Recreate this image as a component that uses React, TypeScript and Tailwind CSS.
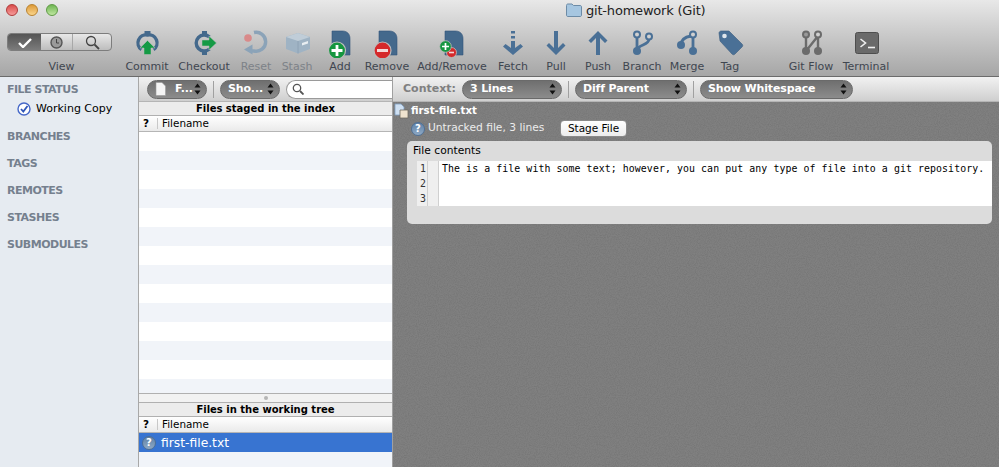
import React from 'react';

const SLATE = '#4a7096';
const HALO = '#bdbdbd';

const CommitIcon = () => (
  <svg width="30" height="30" viewBox="0 0 30 30">
    <path d="M12.500 3h6v5h-6z" fill="#44698c" />
    <path d="M9.500 21.500A8 8 0 0 1 15.500 7a8 8 0 0 1 6 14.500" fill="none" stroke="#44698c" strokeWidth="3.400" />
    <path d="M15.500 12.500l7.500 7.500h-4v6.500h-7V20H8z" fill="#159a45" stroke="#bdbdbd" strokeWidth="0.500" />
  </svg>
);

const CheckoutIcon = () => (
  <svg width="30" height="30" viewBox="0 0 30 30">
    <path d="M13 3h5v5h-5zM13 22h5v5h-5z" fill="#44698c" />
    <path d="M20.500 9a8 8 0 1 0 0 12" fill="none" stroke="#44698c" strokeWidth="3.400" />
    <path d="M27.500 15l-7.500-7v4h-7v6h7v4z" fill="#159a45" stroke="#bdbdbd" strokeWidth="0.500" />
  </svg>
);

const ResetIcon = () => (
  <svg width="30" height="30" viewBox="0 0 30 30">
    <path d="M13 4.500a9.500 9.500 0 1 1 0 18.500h-3" fill="none" stroke="#8ba3b8" strokeWidth="3.400" />
    <path d="M11.500 16.500v10L3 21.500z" fill="#8ba3b8" />
    <circle cx="7" cy="10" r="3.800" fill="#d98a8a" />
  </svg>
);

const StashIcon = () => (
  <svg width="30" height="30" viewBox="0 0 30 30">
    <path d="M16 5l12 4v12l-12 4.500L4 21V9z" fill="#9fb3c4" />
    <path d="M4 9l12 4 12-4-12-4z" fill="#c0cdd8" />
    <path d="M16 13v12.500" stroke="#8ba0b3" strokeWidth="0.800" />
    <path d="M20 15l6-2v2.500l-6 2z" fill="#e8edf1" />
  </svg>
);

const DocShape = () => (
  <path d="M7 3h10.500c4.500 0 7.500 3 7.500 7.500V27H7z" fill="#44698c" stroke="#34557a" strokeWidth="0.600" />
);

const AddIcon = () => (
  <svg width="30" height="30" viewBox="0 0 30 30">
    <DocShape />
    <circle cx="12" cy="22.500" r="8.500" fill="#15963f" stroke={HALO} strokeWidth="1.200" />
    <path d="M12 17v11M6.500 22.500h11" stroke="#fff" strokeWidth="2.800" />
  </svg>
);

const RemoveIcon = () => (
  <svg width="30" height="30" viewBox="0 0 30 30">
    <DocShape />
    <circle cx="10.500" cy="22.500" r="8.500" fill="#d5292b" stroke={HALO} strokeWidth="1.200" />
    <path d="M5 22.500h11" stroke="#f4dada" strokeWidth="3" />
  </svg>
);

const AddRemoveIcon = () => (
  <svg width="30" height="30" viewBox="0 0 30 30">
    <path d="M8 3h10.500c4.500 0 7.500 3 7.500 7.500V27H8z" fill="#44698c" stroke="#34557a" strokeWidth="0.600" />
    <circle cx="14.500" cy="24.500" r="5" fill="#d5292b" stroke={HALO} strokeWidth="0.800" />
    <path d="M12 24.500h5" stroke="#f4dada" strokeWidth="1.600" />
    <circle cx="8.500" cy="18.500" r="5.800" fill="#15963f" stroke={HALO} strokeWidth="0.800" />
    <path d="M8.500 15v7M5 18.500h7" stroke="#fff" strokeWidth="1.700" />
  </svg>
);

const FetchIcon = () => (
  <svg width="30" height="30" viewBox="0 0 30 30">
    <path d="M13 3h4v2.500h-4zM13 8h4v2.500h-4z" fill={SLATE} />
    <path d="M13 13h4v7l5.500-4 2.500 2.500L15 27 5 18.500 7.500 16l5.500 4z" fill={SLATE} />
  </svg>
);

const PullIcon = () => (
  <svg width="30" height="30" viewBox="0 0 30 30">
    <path d="M13 3h4v17l5-5 2.500 2.500L15 27l-9.500-9.500L8 15l5 5z" fill={SLATE} />
  </svg>
);

const PushIcon = () => (
  <svg width="30" height="30" viewBox="0 0 30 30">
    <path d="M13 27h4V10l5 5 2.500-2.500L15 3l-9.500 9.500L8 15l5-5z" fill={SLATE} />
  </svg>
);

const BranchIcon = () => (
  <svg width="30" height="30" viewBox="0 0 30 30">
    <path d="M10 8v15M22 11c0 7-12 5-12 12" fill="none" stroke={SLATE} strokeWidth="2.800" />
    <circle cx="10" cy="6.500" r="3" fill="#d0d0d0" stroke={SLATE} strokeWidth="2" />
    <circle cx="22" cy="8.500" r="3" fill="#d0d0d0" stroke={SLATE} strokeWidth="2" />
    <circle cx="10" cy="23" r="4" fill={SLATE} />
  </svg>
);

const MergeIcon = () => (
  <svg width="30" height="30" viewBox="0 0 30 30">
    <path d="M21 9v14M19 8c-6 1-10 4-10 9" fill="none" stroke={SLATE} strokeWidth="2.800" />
    <circle cx="21" cy="6.500" r="3" fill="#d0d0d0" stroke={SLATE} strokeWidth="2" />
    <circle cx="9" cy="17" r="4" fill={SLATE} />
    <circle cx="21" cy="23" r="4" fill={SLATE} />
  </svg>
);

const TagIcon = () => (
  <svg width="30" height="30" viewBox="0 0 30 30">
    <path d="M4 5c0-1 1-2 2-2h8l13 13c1 1 1 2 0 3l-7 7c-1 1-2 1-3 0L5 13z" fill={SLATE} stroke="#3a5c7d" strokeWidth="0.600" />
    <circle cx="9.500" cy="8" r="2.300" fill="#dfe6ec" />
  </svg>
);

const GitFlowIcon = () => (
  <svg width="30" height="30" viewBox="0 0 30 30">
    <path d="M10 8v15M22 8v15M10 23L22 8" fill="none" stroke="#6b6b6b" strokeWidth="2.400" />
    <circle cx="10" cy="6.500" r="3" fill="#9a9a9a" stroke="#6b6b6b" strokeWidth="2" />
    <circle cx="22" cy="6.500" r="3" fill="#d0d0d0" stroke="#6b6b6b" strokeWidth="2" />
    <circle cx="10" cy="23" r="4" fill="#6b6b6b" />
    <circle cx="22" cy="23" r="4" fill="#6b6b6b" />
  </svg>
);

const TerminalIcon = () => (
  <svg width="30" height="30" viewBox="0 0 30 30">
    <rect x="4.500" y="4.500" width="23" height="21" rx="2" fill="#6a6a6a" stroke="#4e4e4e" />
    <path d="M9.500 11l5 4-5 4" fill="none" stroke="#f0f0f0" strokeWidth="1.600" />
    <path d="M17 19.500h7" stroke="#f0f0f0" strokeWidth="1.600" />
  </svg>
);

const QuestionBadge = () => (
  <span className="flex h-[14px] w-[14px] shrink-0 items-center justify-center rounded-full border border-[#4f6f94] bg-gradient-to-b from-[#5f82a8] to-[#8fa9c4] text-[10px] font-bold leading-none text-white">
    ?
  </span>
);

const PillArrows = () => (
  <svg width="7" height="12" viewBox="0 0 7 12" className="shrink-0">
    <path d="M3.500 0.500L6.500 4.500H0.500zM3.500 11.500L0.500 7.500H6.500z" fill="#111" />
  </svg>
);

const Pill = ({ label, className, icon }: { label: string; className: string; icon?: React.ReactNode }) => (
  <div className={`flex h-[19px] items-center rounded-full border border-[#6a6a6a] bg-gradient-to-b from-[#6f6f6f] to-[#8c8c8c] pl-[7px] pr-[5px] text-[11px] font-bold tracking-[-0.15px] text-white ${className}`}>
    {icon}
    <span className="flex-1 whitespace-nowrap">{label}</span>
    <PillArrows />
  </div>
);

const tools = [
  { label: 'Commit', icon: <CommitIcon />, w: 'w-[57px]', text: 'text-[#3f4650]' },
  { label: 'Checkout', icon: <CheckoutIcon />, w: 'w-[57px]', text: 'text-[#3f4650]' },
  { label: 'Reset', icon: <ResetIcon />, w: 'w-[47px]', text: 'text-[#7d8288]' },
  { label: 'Stash', icon: <StashIcon />, w: 'w-[35px]', text: 'text-[#7d8288]' },
  { label: 'Add', icon: <AddIcon />, w: 'w-[51px]', text: 'text-[#3f4650]' },
  { label: 'Remove', icon: <RemoveIcon />, w: 'w-[43px]', text: 'text-[#3f4650]' },
  { label: 'Add/Remove', icon: <AddRemoveIcon />, w: 'w-[87px]', text: 'text-[#3f4650]' },
  { label: 'Fetch', icon: <FetchIcon />, w: 'w-[35px]', text: 'text-[#3f4650]' },
  { label: 'Pull', icon: <PullIcon />, w: 'w-[51px]', text: 'text-[#3f4650]' },
  { label: 'Push', icon: <PushIcon />, w: 'w-[33px]', text: 'text-[#3f4650]' },
  { label: 'Branch', icon: <BranchIcon />, w: 'w-[55px]', text: 'text-[#3f4650]' },
  { label: 'Merge', icon: <MergeIcon />, w: 'w-[35px]', text: 'text-[#3f4650]' },
  { label: 'Tag', icon: <TagIcon />, w: 'w-[51px]', text: 'text-[#3f4650]' },
];

const sections = ['BRANCHES', 'TAGS', 'REMOTES', 'STASHES', 'SUBMODULES'];

const Tool = ({ label, icon, w, text }: { label: string; icon: React.ReactNode; w: string; text: string }) => (
  <div className={`flex shrink-0 flex-col items-center ${w}`}>
    <div className="h-[30px] w-[30px]">{icon}</div>
    <span className={`mt-[2px] whitespace-nowrap text-[11px] leading-[14px] ${text}`}>{label}</span>
  </div>
);

const ColumnHeader = () => (
  <div className="flex h-[16px] shrink-0 items-center border-b border-[#b5b5b5] bg-gradient-to-b from-white to-[#eaeaea] text-[10.400px] leading-none text-black">
    <span className="w-[18px] pl-[4px] font-bold">?</span>
    <span className="border-l border-[#c8c8c8] pl-[4px]">Filename</span>
  </div>
);

const Title = ({ children, h }: { children: React.ReactNode; h: string }) => (
  <div className={`flex shrink-0 items-center justify-center border-b border-[#b0b0b0] bg-[#ececec] pt-[1px] text-[10px] font-bold leading-none text-black ${h}`}>
    {children}
  </div>
);

export default function App() {
  return (
    <div className="flex h-[467px] w-[999px] flex-col overflow-hidden bg-white font-['DejaVu_Sans',sans-serif]">
      {/* title bar and toolbar */}
      <div className="h-[77px] shrink-0 border-b border-[#6b6b6b] bg-gradient-to-b from-[#e8e8e8] to-[#a6a6a6]">
        <div className="flex h-[20px] items-center">
          <div className="flex gap-[8px] pl-[6px]">
            <span className="h-[12px] w-[12px] rounded-full border border-[#b03a3a] bg-gradient-to-b from-[#d94a4a] to-[#f59a9a]" />
            <span className="h-[12px] w-[12px] rounded-full border border-[#b9822e] bg-gradient-to-b from-[#dd9a35] to-[#f9d58a]" />
            <span className="h-[12px] w-[12px] rounded-full border border-[#5e9a45] bg-gradient-to-b from-[#6eb552] to-[#bfe7a0]" />
          </div>
          <div className="ml-[508px] flex items-center gap-[4px]">
            <svg width="16" height="14" viewBox="0 0 16 14">
              <path d="M0.500 2.500c0-1 .5-1.500 1.500-1.500h4l1.500 1.500h6.500c1 0 1.500.5 1.500 1.500v8c0 1-.5 1.500-1.500 1.500H2c-1 0-1.500-.5-1.500-1.500z" fill="#a6c6e0" stroke="#6c8ba6" />
            </svg>
            <span className="text-[13px] leading-none tracking-[-0.2px] text-[#222]">git-homework (Git)</span>
          </div>
        </div>
        <div className="flex h-[56px] pl-[7px] pt-[8px]">
          <div className="flex w-[105px] shrink-0 flex-col items-center">
            <div className="mt-[5px] flex h-[18px] w-[105px] shrink-0 overflow-hidden rounded-[4px] border border-[#7d7d7d] bg-gradient-to-b from-[#e8e8e8] to-[#bdbdbd]">
              <div className="flex w-[33px] items-center justify-center bg-gradient-to-b from-[#555] to-[#7b7b7b]">
                <svg width="14" height="11" viewBox="0 0 14 11">
                  <path d="M1 6l4 4 8-8" fill="none" stroke="#fff" strokeWidth="2.400" />
                </svg>
              </div>
              <div className="flex w-[32px] items-center justify-center border-r border-[#a8a8a8]">
                <svg width="13" height="13" viewBox="0 0 13 13">
                  <circle cx="6.500" cy="6.500" r="5.500" fill="#9a9a9a" stroke="#555" strokeWidth="1.400" />
                  <path d="M6.500 3v4h2.500" fill="none" stroke="#444" />
                </svg>
              </div>
              <div className="flex flex-1 items-center justify-center">
                <svg width="15" height="15" viewBox="0 0 15 15">
                  <circle cx="6" cy="6" r="4.500" fill="none" stroke="#444" strokeWidth="1.300" />
                  <path d="M9.500 9.500l4.500 4.500" stroke="#444" strokeWidth="1.800" />
                </svg>
              </div>
            </div>
            <span className="mt-[9px] pl-[4px] text-[11px] leading-[14px] text-[#3f4650]">View</span>
          </div>
          <div className="ml-[6.500px] flex">
            {tools.map((t) => (
              <Tool key={t.label} {...t} />
            ))}
          </div>
          <div className="ml-[27.500px] flex">
            <Tool label="Git Flow" icon={<GitFlowIcon />} w="w-[56px]" text="text-[#3f4650]" />
            <Tool label="Terminal" icon={<TerminalIcon />} w="w-[54px]" text="text-[#3f4650]" />
          </div>
        </div>
      </div>

      <div className="flex min-h-0 flex-1">
        {/* sidebar */}
        <div className="w-[139px] shrink-0 border-r border-[#a8a8a8] bg-[#e6ebf1] pl-[7px] pt-[5px]">
          <div className="text-[11px] font-bold leading-[15px] tracking-[-0.5px] text-[#75808e]">FILE STATUS</div>
          <div className="mt-[4px] flex h-[15px] items-center gap-[5px] pl-[10px] text-[11px] leading-none text-black">
            <svg width="14" height="14" viewBox="0 0 14 14">
              <circle cx="7" cy="7" r="6" fill="#fff" stroke="#4668c8" strokeWidth="1.400" />
              <path d="M4 7l2.300 2.500L10.500 4" fill="none" stroke="#2f55b8" strokeWidth="1.800" />
            </svg>
            Working Copy
          </div>
          {sections.map((s, i) => (
            <div
              key={s}
              className={`text-[11px] font-bold leading-[15px] tracking-[-0.5px] text-[#75808e] ${i === 0 ? 'mt-[13px]' : 'mt-[12px]'}`}
            >
              {s}
            </div>
          ))}
        </div>

        {/* file lists */}
        <div className="flex w-[254px] shrink-0 flex-col border-r border-[#a0a0a0]">
          <div className="flex h-[25px] shrink-0 items-center border-b border-[#b5b5b5] bg-gradient-to-b from-[#f2f2f2] to-[#cfcfcf] pl-[8px]">
            <Pill
              label="F..."
              className="w-[60px]"
              icon={
                <svg width="11" height="14" viewBox="0 0 11 14" className="mr-[9px] shrink-0">
                  <path d="M1 0.500h6l3.500 3.500v9.500H1z" fill="#f4f4f4" stroke="#9a9a9a" strokeWidth="0.600" />
                </svg>
              }
            />
            <div className="mx-[6px] h-[17px] w-px shrink-0 bg-[#a0a0a0]" />
            <Pill label="Sho..." className="w-[60px]" />
            <div className="ml-[6px] flex h-[19px] flex-1 items-center rounded-l-full border border-r-0 border-[#9a9a9a] bg-white pl-[5px]">
              <svg width="12" height="12" viewBox="0 0 12 12">
                <circle cx="5" cy="5" r="3.700" fill="none" stroke="#555" strokeWidth="1.300" />
                <path d="M8 8l3.500 3.500" stroke="#555" strokeWidth="1.800" />
              </svg>
            </div>
          </div>
          <Title h="h-[14px]">Files staged in the index</Title>
          <ColumnHeader />
          <div className="h-[261px] shrink-0 overflow-hidden">
            {Array.from({ length: 14 }).map((_, i) => (
              <div key={i} className={`h-[19px] ${i % 2 ? 'bg-[#f1f4f9]' : 'bg-white'}`} />
            ))}
          </div>
          <div className="flex h-[9px] shrink-0 items-center justify-center border-t border-[#b0b0b0] bg-[#f2f2f2]">
            <span className="h-[4px] w-[4px] rounded-full bg-[#b5b5b5]" />
          </div>
          <Title h="h-[15px] border-t">Files in the working tree</Title>
          <ColumnHeader />
          <div className="flex h-[19px] shrink-0 items-center gap-[5px] bg-[#3874d1] pl-[3px] pt-[1px] text-[12.300px] leading-none text-white">
            <QuestionBadge />
            first-file.txt
          </div>
          <div className="flex-1 bg-[#f1f4f9]" />
        </div>

        {/* diff */}
        <div className="flex min-w-0 flex-1 flex-col bg-[#808080]">
          <div className="flex h-[25px] shrink-0 items-center border-b border-[#b5b5b5] bg-gradient-to-b from-[#f2f2f2] to-[#cfcfcf] pl-[10px]">
            <span className="w-[59px] text-[11px] font-bold text-[#808080]">Context:</span>
            <Pill label="3 Lines" className="w-[100px]" />
            <div className="mx-[6px] h-[17px] w-px bg-[#a0a0a0]" />
            <Pill label="Diff Parent" className="w-[112px]" />
            <div className="mx-[6px] h-[17px] w-px bg-[#a0a0a0]" />
            <Pill label="Show Whitespace" className="w-[153px]" />
          </div>
          <div className="relative flex-1">
            {/* speckled backdrop of the diff pane */}
            <svg className="absolute inset-0 h-full w-full" aria-hidden="true">
              <filter id="speckle">
                <feTurbulence type="fractalNoise" baseFrequency="0.9" numOctaves="2" />
                <feColorMatrix values="0 0 0 0 0 0 0 0 0 0 0 0 0 0 0 0.6 0 0 0 -0.2" />
              </filter>
              <rect width="100%" height="100%" filter="url(#speckle)" opacity="0.25" />
            </svg>
            <div className="relative">
              <div className="flex h-[16px] items-center gap-[2px] pl-px pt-[2px]">
                <svg width="15" height="16" viewBox="0 0 15 16">
                  <path d="M1 1h6l3 3v8H1z" fill="#cfe0f2" stroke="#7f9ec2" strokeWidth="0.800" />
                  <path d="M6 7h8v8H6z" fill="#efe3cf" stroke="#6f6a60" strokeWidth="0.800" />
                </svg>
                <span className="text-[10.200px] font-bold leading-none text-white">first-file.txt</span>
              </div>
              <div className="flex h-[20px] items-center pl-[18px] pt-[1px]">
                <QuestionBadge />
                <span className="ml-[3px] w-[132px] text-[10.700px] leading-none text-[#ececec]">Untracked file, 3 lines</span>
                <button className="h-[17px] w-[67px] rounded-[4px] border border-[#8a8a8a] bg-gradient-to-b from-white to-[#ececec] text-[10.500px] leading-none text-black">
                  Stage File
                </button>
              </div>
              <div className="ml-[14px] mt-[3px] h-[83px] w-[585px] overflow-hidden rounded-[5px] bg-[#dcdcdc]">
                <div className="flex h-[20px] items-center pl-[6px] text-[10.700px] leading-none text-black">File contents</div>
                <div className="flex h-[45px] bg-white font-['DejaVu_Sans_Mono',monospace] text-[9.900px] leading-[15px] text-black">
                  <div className="w-[10px] bg-[#dcdcdc]" />
                  <div className="w-[11px] border-r border-[#d0d0d0] bg-[#efefef] pr-[1px] text-right text-[#333]">
                    <div>1</div>
                    <div>2</div>
                    <div>3</div>
                  </div>
                  <div className="w-[11px] border-r border-[#d0d0d0] bg-[#efefef]" />
                  <div className="whitespace-pre pl-[3px] tracking-[0.08px]">The is a file with some text; however, you can put any type of file into a git repository.</div>
                </div>
              </div>
            </div>
          </div>
        </div>
      </div>
    </div>
  );
}
